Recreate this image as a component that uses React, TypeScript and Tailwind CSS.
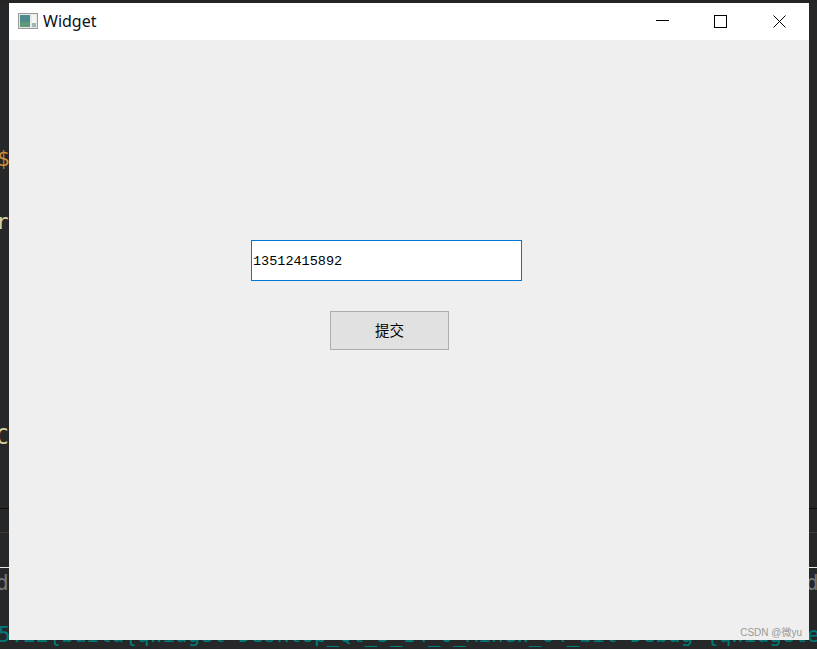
export default function App() {
  return (
    <div className="relative w-[817px] h-[649px] overflow-hidden bg-[#262728]">
      {/* terminal + editor behind the window */}
      <div className="absolute left-0 right-0 top-0 h-[3px] bg-[#252525]" />
      <span className="absolute left-[-3px] top-[146px] text-[21px] leading-[26px] text-[#c98f3b] font-['DejaVu_Sans_Mono',monospace]">$</span>
      <span className="absolute left-[-4px] top-[209px] text-[21px] leading-[26px] text-[#d7d2a0] font-['DejaVu_Sans_Mono',monospace]">r</span>
      <span className="absolute left-[-4px] top-[424px] text-[21px] leading-[26px] text-[#d7cf9a] font-['DejaVu_Sans_Mono',monospace]">C</span>
      <div className="absolute left-0 right-0 top-[508px] h-px bg-[#0c0c0c]" />
      <div className="absolute left-0 right-0 top-[532px] h-px bg-[#3c3c3c]" />
      <div className="absolute left-0 right-0 top-[567px] h-px bg-[#e8e8e8]" />
      <span className="absolute left-[-4px] top-[570px] text-[21px] leading-[26px] text-[#77777a] font-['DejaVu_Sans_Mono',monospace]">d</span>
      <span className="absolute left-[806px] top-[570px] text-[21px] leading-[26px] text-[#77777a] font-['DejaVu_Sans_Mono',monospace]">d</span>
      <span className="absolute left-[-2px] top-[622px] whitespace-pre text-[21px] leading-[26px] text-[#007a78] font-['DejaVu_Sans_Mono',monospace]">5:22{"{"}build{"{"}qWidget-Desktop_Qt_5_14_0_MinGW_64_bit-Debug {"{"}qWidgete</span>

      {/* Widget window */}
      <div className="absolute left-[9px] top-[3px] w-[800px] h-[637px] flex flex-col bg-[#efefef]">
        <div className="h-[37px] shrink-0 bg-white flex items-center">
          <svg width="20" height="16" viewBox="0 0 20 16" className="ml-[9px] mt-[-2px]">
            <rect x="0.5" y="0.5" width="19" height="15" fill="#e8e8e8" stroke="#9a9a9a" />
            <rect x="2" y="2" width="10" height="12" fill="#4d8a8c" />
            <rect x="2" y="9" width="10" height="5" fill="#5e9a78" />
            <rect x="14" y="2" width="4" height="12" fill="#f4f6f6" />
            <rect x="14" y="10" width="4" height="4" fill="#9fb6b6" />
          </svg>
          <span className="ml-[5px] mt-[-1px] text-[16px] leading-5 text-[#0b1220] font-['Noto_Sans',sans-serif]">Widget</span>
          <div className="ml-auto flex">
            <button className="w-[57px] h-[37px] flex items-center justify-center">
              <svg width="13" height="13" viewBox="0 0 13 13"><path d="M0 5.5H13" stroke="#000" /></svg>
            </button>
            <button className="w-[59px] h-[37px] flex items-center justify-center">
              <svg width="13" height="13" viewBox="0 0 13 13"><rect x="0.5" y="0.5" width="12" height="12" fill="none" stroke="#000" /></svg>
            </button>
            <button className="w-[59px] h-[37px] flex items-center justify-center">
              <svg width="13" height="13" viewBox="0 0 13 13"><path d="M0.5 0.5L12.5 12.5M12.5 0.5L0.5 12.5" stroke="#000" /></svg>
            </button>
          </div>
        </div>

        <div className="flex-1 relative">
          <div className="ml-[242px] mt-[200px] w-[271px] h-[41px] border border-[#0078d7] bg-white flex items-center pl-[1px] pt-[3px] text-[13.5px] text-black font-['Liberation_Mono',monospace]">
            13512415892
          </div>
          <button className="block ml-[321px] mt-[30px] w-[119px] h-[39px] border border-[#adadad] bg-[#e1e1e1] pb-[2px] text-[14.5px] text-black font-['Noto_Sans_CJK_SC',sans-serif]">
            提交
          </button>
          <span className="absolute right-[7px] bottom-0 text-[10px] leading-[14px] text-[#9a9a9a] font-['Liberation_Sans','Noto_Sans_CJK_SC',sans-serif]">CSDN @微yu</span>
        </div>
      </div>
    </div>
  );
}
